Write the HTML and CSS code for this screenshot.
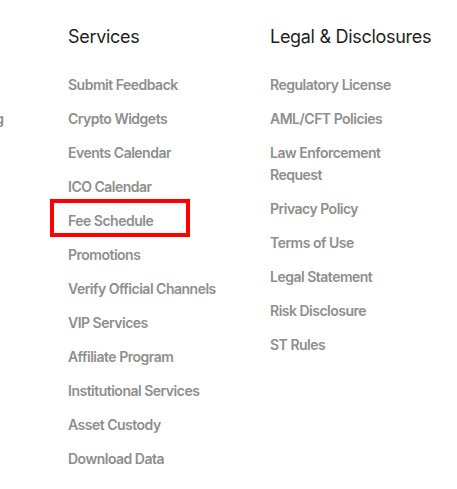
FILE: index.html
```html
<!DOCTYPE html>
<html lang="en">
<head>
  <meta charset="UTF-8">
  <meta name="viewport" content="width=device-width, initial-scale=1.0">
  <title>Footer Links</title>
  <link rel="stylesheet" href="styles.css">
</head>
<body>
  <div class="footer">
    <div class="column column-first">
      <h3>Trade</h3>
      <ul>
        <li><a href="#">Spot</a></li>
        <li><a href="#">Spot &amp; Margin Trading</a></li>
        <li><a href="#">Futures</a></li>
      </ul>
    </div>
    <div class="column">
      <h3>Services</h3>
      <ul>
        <li><a href="#">Submit Feedback</a></li>
        <li><a href="#">Crypto Widgets</a></li>
        <li><a href="#">Events Calendar</a></li>
        <li><a href="#">ICO Calendar</a></li>
        <li><a href="#" class="highlight">Fee Schedule</a></li>
        <li><a href="#">Promotions</a></li>
        <li><a href="#">Verify Official Channels</a></li>
        <li><a href="#">VIP Services</a></li>
        <li><a href="#">Affiliate Program</a></li>
        <li><a href="#">Institutional Services</a></li>
        <li><a href="#">Asset Custody</a></li>
        <li><a href="#">Download Data</a></li>
      </ul>
    </div>
    <div class="column">
      <h3>Legal &amp; Disclosures</h3>
      <ul>
        <li><a href="#">Regulatory License</a></li>
        <li><a href="#">AML/CFT Policies</a></li>
        <li><a href="#">Law Enforcement Request</a></li>
        <li><a href="#">Privacy Policy</a></li>
        <li><a href="#">Terms of Use</a></li>
        <li><a href="#">Legal Statement</a></li>
        <li><a href="#">Risk Disclosure</a></li>
        <li><a href="#">ST Rules</a></li>
      </ul>
    </div>
  </div>
</body>
</html>
```

FILE: styles.css
```css
body {
  margin: 0;
  background-color: #fff;
  font-family: 'Inter', 'Liberation Sans', sans-serif;
  overflow: hidden;
}

.footer {
  display: flex;
  margin-left: -136px;
  padding-top: 25px;
}

.column {
  width: 202px;
  flex-shrink: 0;
}

.column-first {
  width: 204px;
}

.column h3 {
  margin: 0;
  font-size: 18px;
  font-weight: 400;
  line-height: 24px;
  letter-spacing: -0.3px;
  color: #1e1e1e;
}

.column ul {
  list-style: none;
  margin: 25px 0 0;
  padding: 0;
  display: flex;
  flex-direction: column;
  gap: 12px;
}

.column li {
  width: 160px;
}

.column-first li {
  width: auto;
  white-space: nowrap;
}

.column a {
  position: relative;
  display: inline-block;
  font-size: 14px;
  font-weight: 600;
  line-height: 22px;
  letter-spacing: -0.5px;
  color: #8e8e8e;
  text-decoration: none;
}

/* red marker around the highlighted link */
.highlight::after {
  content: '';
  position: absolute;
  left: -18px;
  top: -11px;
  width: 140px;
  height: 38px;
  border: 4px solid #f00;
  box-sizing: border-box;
}
```
